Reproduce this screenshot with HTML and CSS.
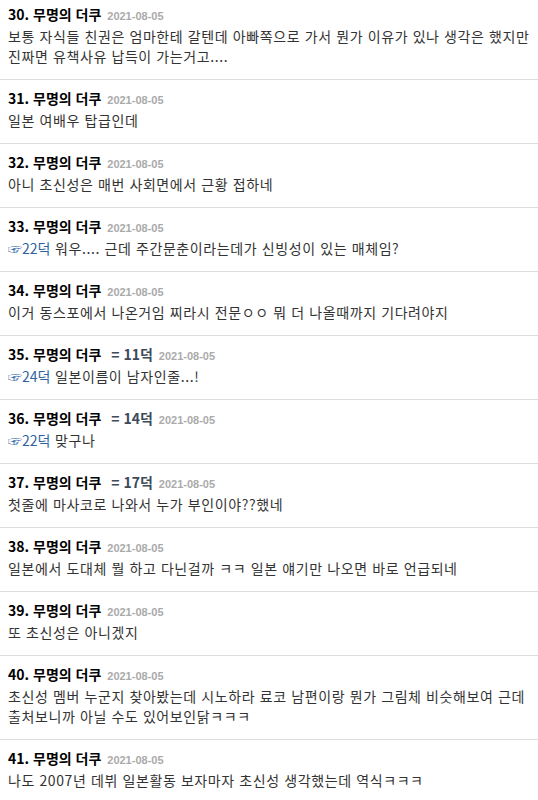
FILE: index.html
```html
<!DOCTYPE html>
<html lang="ko">
<head>
<meta charset="utf-8">
<link rel="stylesheet" href="styles.css">
</head>
<body>
<ul class="comments">
  <li class="comment">
    <div class="head"><span class="num">30.</span> <span class="name">무명의 더쿠</span> <span class="date">2021-08-05</span></div>
    <div class="text">보통 자식들 친권은 엄마한테 갈텐데 아빠쪽으로 가서 뭔가 이유가 있나 생각은 했지만 진짜면 유책사유 납득이 가는거고....</div>
  </li>
  <li class="comment">
    <div class="head"><span class="num">31.</span> <span class="name">무명의 더쿠</span> <span class="date">2021-08-05</span></div>
    <div class="text">일본 여배우 탑급인데</div>
  </li>
  <li class="comment">
    <div class="head"><span class="num">32.</span> <span class="name">무명의 더쿠</span> <span class="date">2021-08-05</span></div>
    <div class="text">아니 초신성은 매번 사회면에서 근황 접하네</div>
  </li>
  <li class="comment">
    <div class="head"><span class="num">33.</span> <span class="name">무명의 더쿠</span> <span class="date">2021-08-05</span></div>
    <div class="text"><a class="ref">☞22덕</a> 워우.... 근데 주간문춘이라는데가 신빙성이 있는 매체임?</div>
  </li>
  <li class="comment">
    <div class="head"><span class="num">34.</span> <span class="name">무명의 더쿠</span> <span class="date">2021-08-05</span></div>
    <div class="text">이거 동스포에서 나온거임 찌라시 전문ㅇㅇ 뭐 더 나올때까지 기다려야지</div>
  </li>
  <li class="comment">
    <div class="head"><span class="num">35.</span> <span class="name">무명의 더쿠</span> <span class="same">= 11덕</span> <span class="date">2021-08-05</span></div>
    <div class="text"><a class="ref">☞24덕</a> 일본이름이 남자인줄...!</div>
  </li>
  <li class="comment">
    <div class="head"><span class="num">36.</span> <span class="name">무명의 더쿠</span> <span class="same">= 14덕</span> <span class="date">2021-08-05</span></div>
    <div class="text"><a class="ref">☞22덕</a> 맞구나</div>
  </li>
  <li class="comment">
    <div class="head"><span class="num">37.</span> <span class="name">무명의 더쿠</span> <span class="same">= 17덕</span> <span class="date">2021-08-05</span></div>
    <div class="text">첫줄에 마사코로 나와서 누가 부인이야??했네</div>
  </li>
  <li class="comment">
    <div class="head"><span class="num">38.</span> <span class="name">무명의 더쿠</span> <span class="date">2021-08-05</span></div>
    <div class="text">일본에서 도대체 뭘 하고 다닌걸까 ㅋㅋ 일본 얘기만 나오면 바로 언급되네</div>
  </li>
  <li class="comment">
    <div class="head"><span class="num">39.</span> <span class="name">무명의 더쿠</span> <span class="date">2021-08-05</span></div>
    <div class="text">또 초신성은 아니겠지</div>
  </li>
  <li class="comment">
    <div class="head"><span class="num">40.</span> <span class="name">무명의 더쿠</span> <span class="date">2021-08-05</span></div>
    <div class="text">초신성 멤버 누군지 찾아봤는데 시노하라 료코 남편이랑 뭔가 그림체 비슷해보여 근데 출처보니까 아닐 수도 있어보인닭ㅋㅋㅋ</div>
  </li>
  <li class="comment">
    <div class="head"><span class="num">41.</span> <span class="name">무명의 더쿠</span> <span class="date">2021-08-05</span></div>
    <div class="text">나도 2007년 데뷔 일본활동 보자마자 초신성 생각했는데 역식ㅋㅋㅋ</div>
  </li>
</ul>
</body>
</html>
```

FILE: styles.css
```css
html, body {
  margin: 0;
  padding: 0;
  background: #fff;
}

body {
  font-family: "Noto Sans CJK KR", "Noto Sans", sans-serif;
  font-size: 14px;
  color: #333;
}

.comments {
  list-style: none;
  margin: -4px 0 0;
  padding: 0;
}

.comment {
  padding: 8px 0 13px 8px;
  border-bottom: 1px solid #ddd;
}

.head {
  height: 20px;
  line-height: 20px;
  margin-bottom: 2px;
  font-weight: bold;
  color: #000;
  white-space: nowrap;
}

.head span {
  line-height: 1;
}

.date {
  font-family: "Liberation Sans", Arial, sans-serif;
  font-size: 11px;
  color: #aaa;
  margin-left: 2px;
}

.same {
  color: #3d4a5a;
  margin-left: 6px;
}

.text {
  line-height: 20px;
  letter-spacing: 0.6px;
  word-break: keep-all;
}

.ref {
  color: #2d63a0;
  text-decoration: none;
  letter-spacing: 0;
}
```
